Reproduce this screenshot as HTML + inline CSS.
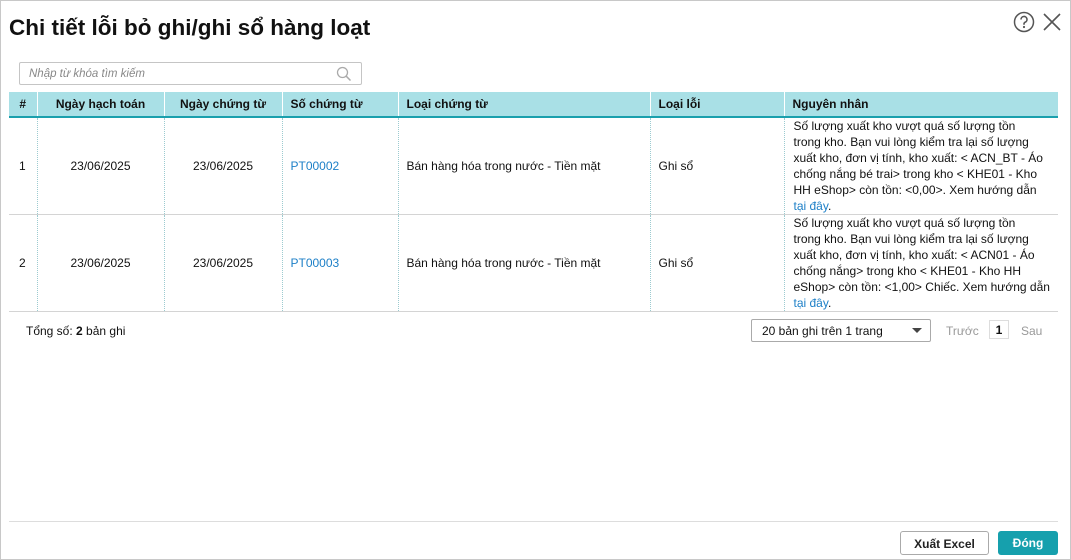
<!DOCTYPE html>
<html><head><meta charset="utf-8"><style>
*{box-sizing:border-box;margin:0;padding:0}
body{width:1071px;height:560px;background:#fff;font-family:"Liberation Sans",sans-serif;font-size:12px;color:#111;position:relative;overflow:hidden}
.frame{position:absolute;left:0;top:0;width:1071px;height:560px;border:1px solid #c8c8c8}
.a{position:absolute}
h1{position:absolute;left:9px;top:15px;font-size:22.5px;font-weight:bold;color:#111}
.search{left:19px;top:62px;width:343px;height:23px;border:1px solid #c5c5c5;border-radius:2px}
.search span{position:absolute;left:9px;top:5px;font-style:italic;color:#888;font-size:11.5px}
table{position:absolute;left:9px;top:92px;width:1049px;border-collapse:collapse;table-layout:fixed}
th{background:#a9e0e6;height:25px;font-weight:bold;text-align:left;padding-left:8px;border-bottom:2px solid #1aa0ad;border-left:1px solid #fff;font-size:12px}
th:first-child{border-left:none;text-align:center;padding:0}
td{border-left:1px dotted #9ccbd0;border-bottom:1px solid #d4d4d4;padding-left:8px;vertical-align:middle;font-size:12px;height:97px}
td:first-child{border-left:none;padding-left:10px}
td.c{text-align:center;padding-left:0}
.link{color:#1c7fc7}
.reason{line-height:16px;padding:0 4px 0 9px}
</style></head><body>
<div class="frame"></div>
<h1>Chi tiết lỗi bỏ ghi/ghi sổ hàng loạt</h1>
<svg class="a" style="left:1013px;top:11px" width="22" height="22" viewBox="0 0 22 22"><circle cx="11" cy="11" r="9.5" fill="none" stroke="#555" stroke-width="1.5"/><path d="M8 8.5a3 3 0 1 1 4 2.8c-.8.4-1 .9-1 1.7v.8" fill="none" stroke="#555" stroke-width="1.6"/><circle cx="11" cy="16" r="1.1" fill="#555"/></svg>
<svg class="a" style="left:1043px;top:13px" width="18" height="18" viewBox="0 0 18 18"><path d="M1 1L17 17M17 1L1 17" stroke="#555" stroke-width="1.6"/></svg>
<div class="a search"><span>Nhập từ khóa tìm kiếm</span>
<svg class="a" style="left:316px;top:3px" width="16" height="16" viewBox="0 0 16 16"><circle cx="6.5" cy="6.5" r="5" fill="none" stroke="#aaa" stroke-width="1.3"/><path d="M10.2 10.2L14.5 14.5" stroke="#aaa" stroke-width="1.5"/></svg></div>
<table>
<colgroup><col style="width:28px"><col style="width:127px"><col style="width:118px"><col style="width:116px"><col style="width:252px"><col style="width:134px"><col style="width:274px"></colgroup>
<tr><th>#</th><th style="text-align:center;padding:0">Ngày hạch toán</th><th style="text-align:center;padding:0">Ngày chứng từ</th><th>Số chứng từ</th><th>Loại chứng từ</th><th>Loại lỗi</th><th>Nguyên nhân</th></tr>
<tr><td>1</td><td class="c">23/06/2025</td><td class="c">23/06/2025</td><td class="link">PT00002</td><td>Bán hàng hóa trong nước - Tiền mặt</td><td>Ghi sổ</td><td class="reason">Số lượng xuất kho vượt quá số lượng tồn<br>trong kho. Bạn vui lòng kiểm tra lại số lượng<br>xuất kho, đơn vị tính, kho xuất: &lt; ACN_BT - Áo<br>chống nắng bé trai&gt; trong kho &lt; KHE01 - Kho<br>HH eShop&gt; còn tồn: &lt;0,00&gt;. Xem hướng dẫn<br><span class="link">tại đây</span>.</td></tr>
<tr><td>2</td><td class="c">23/06/2025</td><td class="c">23/06/2025</td><td class="link">PT00003</td><td>Bán hàng hóa trong nước - Tiền mặt</td><td>Ghi sổ</td><td class="reason">Số lượng xuất kho vượt quá số lượng tồn<br>trong kho. Bạn vui lòng kiểm tra lại số lượng<br>xuất kho, đơn vị tính, kho xuất: &lt; ACN01 - Áo<br>chống nắng&gt; trong kho &lt; KHE01 - Kho HH<br>eShop&gt; còn tồn: &lt;1,00&gt; Chiếc. Xem hướng dẫn<br><span class="link">tại đây</span>.</td></tr>
</table>
<div class="a" style="left:26px;top:324px">Tổng số: <b>2</b> bản ghi</div>
<div class="a" style="left:751px;top:319px;width:180px;height:23px;border:1px solid #aaa;border-radius:2px;padding:4px 0 0 10px">20 bản ghi trên 1 trang<span class="a" style="right:8px;top:8px;width:0;height:0;border-left:5px solid transparent;border-right:5px solid transparent;border-top:5px solid #444"></span></div>
<div class="a" style="left:946px;top:324px;color:#999">Trước</div>
<div class="a" style="left:989px;top:320px;width:20px;height:19px;border:1px solid #ddd;text-align:center;padding-top:2px;font-weight:bold">1</div>
<div class="a" style="left:1021px;top:324px;color:#999">Sau</div>
<div class="a" style="left:9px;top:521px;width:1049px;border-top:1px solid #ddd"></div>
<div class="a" style="left:900px;top:531px;width:89px;height:24px;border:1px solid #aaa;border-radius:3px;text-align:center;padding-top:5px;font-weight:bold;color:#222">Xuất Excel</div>
<div class="a" style="left:998px;top:531px;width:60px;height:24px;background:#16a0ad;border-radius:3px;text-align:center;padding-top:5px;font-weight:bold;color:#fff">Đóng</div>
</body></html>
